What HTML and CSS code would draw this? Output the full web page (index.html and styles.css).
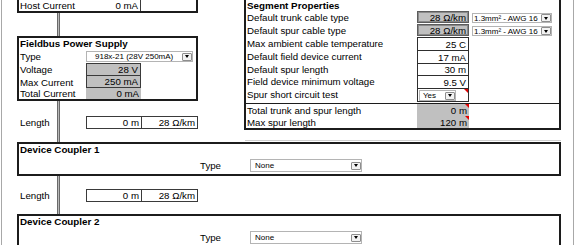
FILE: index.html
```html
<!DOCTYPE html>
<html lang="en">

<head>
    <title>Segment Designer</title>
    <link rel="stylesheet" href="styles.css">
</head>

<body>
    <div class="sheet">
        <div class="top">
            <div class="chain">
                <div class="box host">
                    <div class="row host-row">
                        <span class="label">Host Current</span>
                        <span class="cell split">0 mA</span>
                    </div>
                </div>

                <div class="link short"><span class="wire"></span></div>

                <div class="box supply">
                    <div class="box-title">Fieldbus Power Supply</div>
                    <div class="row r-type">
                        <span class="label">Type</span>
                        <span class="select supply-type">918x-21 (28V 250mA)<i class="arrow"></i></span>
                    </div>
                    <div class="row r-volt">
                        <span class="label">Voltage</span>
                        <span class="cell shaded framed">28 V</span>
                    </div>
                    <div class="row r-max">
                        <span class="label">Max Current</span>
                        <span class="cell shaded framed">250 mA</span>
                    </div>
                    <div class="row r-total">
                        <span class="label">Total Current</span>
                        <span class="cell shaded">0 mA</span>
                    </div>
                </div>

                <div class="link tall">
                    <span class="len-label">Length</span>
                    <span class="wire"></span>
                    <span class="len-cell first">0 m</span>
                    <span class="len-cell">28 Ω/km</span>
                </div>
            </div>

            <div class="box segment">
                <div class="box-title">Segment Properties</div>
                <div class="seg-rows">
                    <div class="seg-row">
                        <span class="seg-label">Default trunk cable type</span>
                        <span class="seg-val cable-val">28 Ω/km</span>
                        <span class="select cable">1.3mm² - AWG 16<i class="arrow"></i></span>
                    </div>
                    <div class="seg-row">
                        <span class="seg-label">Default spur cable type</span>
                        <span class="seg-val cable-val">28 Ω/km</span>
                        <span class="select cable">1.3mm² - AWG 16<i class="arrow"></i></span>
                    </div>
                    <div class="seg-row">
                        <span class="seg-label">Max ambient cable temperature</span>
                        <span class="seg-val framed">25 C</span>
                    </div>
                    <div class="seg-row">
                        <span class="seg-label">Default field device current</span>
                        <span class="seg-val framed">17 mA</span>
                    </div>
                    <div class="seg-row short-row">
                        <span class="seg-label">Default spur length</span>
                        <span class="seg-val framed">30 m</span>
                    </div>
                    <div class="seg-row">
                        <span class="seg-label">Field device minimum voltage</span>
                        <span class="seg-val framed">9.5 V</span>
                    </div>
                    <div class="seg-row">
                        <span class="seg-label">Spur short circuit test</span>
                        <span class="seg-val framed noted">
                            <span class="select yes">Yes<i class="arrow"></i></span>
                        </span>
                    </div>
                </div>
                <div class="seg-totals">
                    <div class="seg-row">
                        <span class="seg-label">Total trunk and spur length</span>
                        <span class="seg-val shaded noted">0 m</span>
                    </div>
                    <div class="seg-row">
                        <span class="seg-label">Max spur length</span>
                        <span class="seg-val shaded noted">120 m</span>
                    </div>
                </div>
            </div>
        </div>

        <div class="box coupler">
            <div class="box-title">Device Coupler 1</div>
            <div class="coupler-row">
                <span class="coupler-label">Type</span>
                <span class="select coupler-type">None<i class="arrow"></i></span>
            </div>
        </div>

        <div class="link mid">
            <span class="len-label">Length</span>
            <span class="wire"></span>
            <span class="len-cell first">0 m</span>
            <span class="len-cell">28 Ω/km</span>
        </div>

        <div class="box coupler last">
            <div class="box-title">Device Coupler 2</div>
            <div class="coupler-row">
                <span class="coupler-label">Type</span>
                <span class="select coupler-type">None<i class="arrow"></i></span>
            </div>
        </div>
    </div>
</body>

</html>
```

FILE: styles.css
```css
html,
body {
    margin: 0;
    overflow: hidden;
    background: #fff;
}

body {
    font-family: "Liberation Sans", Arial, sans-serif;
    font-size: 9.7px;
    color: #000;
}

.sheet {
    box-sizing: border-box;
    width: 573px;
    height: 245px;
    margin-left: 1px;
    padding-left: 15px;
    border-left: 1px solid #a8a8a8;
    border-right: 1px solid #a8a8a8;
    overflow: hidden;
    /* faint cell gridline under the segment block */
    background: linear-gradient(#cfcfcf, #cfcfcf) 243px 140px / 316px 1px no-repeat;
}

.top {
    display: flex;
    align-items: flex-start;
    gap: 46px;
    height: 142px;
}

.chain {
    display: flex;
    flex-direction: column;
    width: 181px;
}

.box {
    box-sizing: border-box;
    border: 2px solid #1c1c1c;
    background: #fff;
}

.box-title {
    height: 11px;
    line-height: 11px;
    padding-left: 1px;
    font-weight: bold;
    font-size: 9.8px;
}

/* left column: host + power supply */

.row {
    display: flex;
    align-items: stretch;
}

.label {
    display: flex;
    align-items: center;
    width: 66px;
    padding-left: 1px;
}

.cell {
    box-sizing: border-box;
    display: flex;
    align-items: center;
    justify-content: flex-end;
    width: 55px;
    padding-right: 2px;
}

.host {
    border-top: none;
}

.host-row {
    height: 11px;
}

.cell.split {
    border-right: 1px solid #3a3a3a;
}

.supply .box-title {
    height: 12px;
    line-height: 12px;
}

.r-type {
    height: 13px;
    align-items: center;
}

.r-volt {
    height: 13px;
}

.r-max {
    height: 12px;
}

.r-total {
    height: 11px;
}

.shaded {
    background: #c0c0c0;
}

.cell.framed {
    border: 1px solid #3a3a3a;
}

.r-max .cell.framed {
    border-top: none;
}

/* combo boxes */

.select {
    box-sizing: border-box;
    display: flex;
    align-items: center;
    justify-content: space-between;
    background: #fff;
    border: 1px solid #b4b4b4;
    font-size: 8px;
    white-space: nowrap;
}

.arrow {
    box-sizing: border-box;
    display: flex;
    align-items: center;
    justify-content: center;
    width: 10px;
    height: 8px;
    background: #f2f2f2;
    border: 1px solid #8e8e8e;
    border-radius: 1px;
}

.arrow::after {
    content: "";
    border-left: 2.5px solid transparent;
    border-right: 2.5px solid transparent;
    border-top: 3px solid #000;
}

.supply-type {
    width: 107px;
    height: 11px;
    padding: 0 0 0 8px;
}

/* connectors between boxes */

.link {
    display: grid;
    grid-template-columns: 40px 3px 26px 56px 56px;
    align-items: center;
}

.link.short {
    height: 23px;
}

.link.tall {
    height: 41px;
    padding-top: 2px;
    box-sizing: border-box;
}

.link.mid {
    height: 38px;
}

.wire {
    grid-column: 2;
    align-self: stretch;
    box-sizing: border-box;
    border-left: 1px solid #6a6a6a;
    border-right: 1px solid #6a6a6a;
    background: #b8b8b8;
}

.link.tall .wire {
    margin-top: -2px;
}

.len-label {
    grid-column: 1;
    padding-left: 3px;
}

.len-cell {
    box-sizing: border-box;
    height: 13px;
    line-height: 11px;
    padding-right: 2px;
    text-align: right;
    border: 1px solid #3a3a3a;
}

.len-cell.first {
    grid-column: 4;
}

.len-cell + .len-cell {
    border-left: none;
}

/* segment properties */

.segment {
    width: 317px;
    border-top: none;
}

.seg-rows {
    padding-bottom: 2px;
    border-bottom: 1px solid #1c1c1c;
}

.seg-row {
    display: flex;
    align-items: stretch;
    height: 13px;
}

.seg-row.short-row {
    height: 12px;
}

.seg-totals .seg-row {
    height: 12px;
}

.seg-label {
    display: flex;
    align-items: center;
    width: 170px;
    padding-left: 1px;
}

.seg-val {
    position: relative;
    box-sizing: border-box;
    display: flex;
    align-items: center;
    justify-content: flex-end;
    width: 52px;
    padding-right: 2px;
}

.seg-val.framed {
    border: 1px solid #2e2e2e;
    margin-bottom: -1px;
}

.cable-val {
    background: #c0c0c0;
    border: 1px solid #5c5c5c;
    box-shadow: inset 0 0 0 1px #8a8a8a;
    margin-bottom: 1px;
}

.noted::after {
    content: "";
    position: absolute;
    top: 0;
    right: 0;
    border-left: 4px solid transparent;
    border-top: 4px solid #e00000;
}

.cable {
    width: 80px;
    height: 10px;
    margin: 2px 0 0 3px;
    padding-left: 1px;
}

.yes {
    position: absolute;
    left: 1px;
    top: 1px;
    width: 37px;
    height: 11px;
    padding-left: 3px;
}

/* device couplers */

.coupler {
    width: 544px;
}

.coupler-row {
    display: flex;
    align-items: center;
    height: 19px;
    padding: 2px 0 0 181px;
    box-sizing: border-box;
}

.coupler-label {
    width: 50px;
}

.coupler-type {
    width: 112px;
    height: 13px;
    padding-left: 4px;
}

.coupler.last {
    height: 60px;
}
```
